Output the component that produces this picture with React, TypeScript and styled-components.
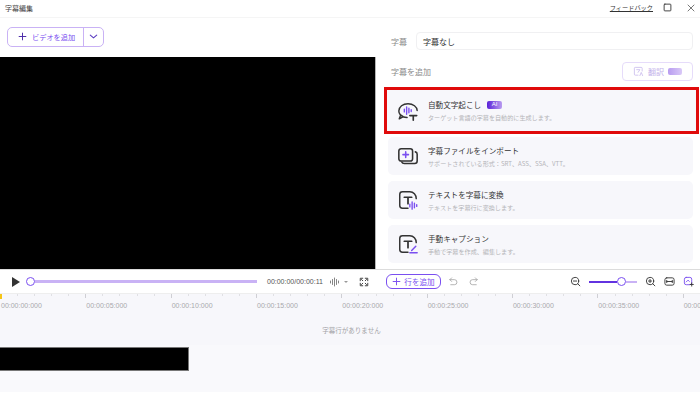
import styled, { createGlobalStyle } from "styled-components";
import { ReactNode } from "react";

const purple = "#7a4ff0";
const soft = "#c9b2f5";

const GlobalStyle = createGlobalStyle`
  html, body { margin: 0; padding: 0; background: #fff; }
  body {
    width: 700px;
    height: 400px;
    overflow: hidden;
    font-family: "Noto Sans CJK JP", "Liberation Sans", sans-serif;
    color: #333;
  }
`;

const Page = styled.div`
  width: 700px;
  height: 400px;
  display: flex;
  flex-direction: column;
`;

const TitleBar = styled.div`
  height: 18px;
  display: flex;
  align-items: center;
  justify-content: space-between;
  padding: 0 5px 2px 5px;
  box-sizing: border-box;
  border-bottom: 1px solid #f5f5f5;
`;

const AppTitle = styled.div`
  font-size: 7px;
  color: #444;
`;

const WindowTools = styled.div`
  display: flex;
  align-items: center;
`;

const Feedback = styled.a`
  font-size: 6.2px;
  color: #333;
  text-decoration: underline;
  margin-right: 10px;
`;

const CloseSlot = styled.span`
  display: flex;
  margin-left: 15px;
`;

const Main = styled.div`
  height: 251px;
  display: flex;
`;

const LeftPane = styled.div`
  width: 376px;
  display: flex;
  flex-direction: column;
`;

const AddRow = styled.div`
  height: 39px;
  display: flex;
  align-items: center;
  padding: 0 0 2px 7px;
  box-sizing: border-box;
`;

const SplitButton = styled.div`
  width: 97px;
  height: 20px;
  display: flex;
  border: 1px solid ${soft};
  border-radius: 5px;
  box-sizing: border-box;
  color: ${purple};
`;

const SplitMain = styled.div`
  flex: 1;
  display: flex;
  align-items: center;
  gap: 5px;
  padding-left: 10px;
  font-size: 7.2px;
  border-right: 1px solid ${soft};
`;

const SplitArrow = styled.div`
  width: 19px;
  display: flex;
  align-items: center;
  justify-content: center;
`;

const Video = styled.div`
  height: 212px;
  background: #000;
  border-right: 1px solid #b5b5b5;
`;

const RightPane = styled.div`
  flex: 1;
  display: flex;
  flex-direction: column;
  padding: 14px 7px 0 12px;
  box-sizing: border-box;
`;

const FieldRow = styled.div`
  display: flex;
  align-items: center;
  justify-content: space-between;
  padding-left: 3px;
  height: 18px;
`;

const FieldLabel = styled.span`
  font-size: 8px;
  color: #8b8b8b;
`;

const SelectBox = styled.div`
  width: 277px;
  height: 18px;
  display: flex;
  align-items: center;
  padding-left: 6px;
  box-sizing: border-box;
  border: 1px solid #f0f0f2;
  border-radius: 4px;
  font-size: 8px;
  color: #333;
`;

const AddHeader = styled(FieldRow)`
  margin-top: 12px;
  height: 19px;
`;

const TranslateButton = styled.div`
  width: 71px;
  height: 19px;
  display: flex;
  align-items: center;
  justify-content: center;
  gap: 4px;
  border: 1px solid #e6dcfa;
  border-radius: 4px;
  box-sizing: border-box;
  font-size: 8px;
  color: #c3b2ea;
`;

const FadedBadge = styled.span`
  width: 14px;
  height: 7px;
  border-radius: 2px;
  background: linear-gradient(90deg, #b89cf0, #d9c9f7);
`;

const CardList = styled.div`
  display: flex;
  flex-direction: column;
  gap: 6px;
  margin-top: 6px;
`;

const Highlight = styled.div`
  margin: 0 -6px -3px -4px;
  height: 47px;
  flex: none;
  border: 3px solid #e00b0b;
  box-sizing: border-box;
  display: flex;
`;

const Card = styled.div<{ $framed?: boolean }>`
  flex: ${({ $framed }) => ($framed ? "1" : "none")};
  height: ${({ $framed }) => ($framed ? "auto" : "38px")};
  display: flex;
  align-items: center;
  gap: 9px;
  padding-left: ${({ $framed }) => ($framed ? "10px" : "9px")};
  background: #f7f7fb;
  border-radius: ${({ $framed }) => ($framed ? "0" : "5px")};
`;

const CardText = styled.div`
  display: flex;
  flex-direction: column;
  gap: 3px;
`;

const CardTitle = styled.div`
  display: flex;
  align-items: center;
  gap: 6px;
  font-size: 7.6px;
  line-height: 11px;
  color: #333;
`;

const CardHint = styled.div`
  font-size: 6.1px;
  line-height: 9px;
  color: #b4b4b8;
`;

const AiBadge = styled.span`
  width: 15px;
  height: 8px;
  display: flex;
  align-items: center;
  justify-content: center;
  border-radius: 2px;
  background: linear-gradient(90deg, #5a22d8, #b99bf0);
  color: #fff;
  font-size: 6px;
  font-family: "Liberation Sans", sans-serif;
`;

const ControlBar = styled.div`
  height: 24px;
  display: flex;
  border-top: 1px solid #dcdcdc;
  box-sizing: border-box;
`;

const Player = styled.div`
  width: 375px;
  display: flex;
  align-items: center;
  padding: 0 4px 0 12px;
  box-sizing: border-box;
`;

const Knob = styled.span`
  width: 7px;
  height: 7px;
  border: 1px solid ${purple};
  border-radius: 50%;
  background: #fff;
  flex: none;
`;

const SeekTrack = styled.div`
  width: 222px;
  height: 2.5px;
  margin-right: 10px;
  background: ${soft};
`;

const SeekKnob = styled(Knob)`
  margin-left: 6px;
`;

const TimeCode = styled.span`
  font-size: 7px;
  color: #555;
  width: 56px;
  white-space: nowrap;
  font-family: "Liberation Sans", sans-serif;
`;

const PlayerTools = styled.div`
  display: flex;
  align-items: center;
  margin-left: 6px;
  gap: 3px;
`;

const Caret = styled.span`
  border-left: 2px solid transparent;
  border-right: 2px solid transparent;
  border-top: 2.5px solid #999;
  margin-right: 8px;
`;

const EditTools = styled.div`
  flex: 1;
  display: flex;
  align-items: center;
  padding-left: 11px;
`;

const AddLine = styled.div`
  width: 55px;
  height: 15px;
  display: flex;
  align-items: center;
  justify-content: center;
  gap: 3px;
  border: 1px solid ${purple};
  border-radius: 6px;
  box-sizing: border-box;
  font-size: 7.6px;
  color: ${purple};
`;

const History = styled.div`
  display: flex;
  gap: 9px;
  margin-left: 7px;
`;

const ZoomTools = styled.div`
  margin-left: auto;
  margin-right: 6px;
  display: flex;
  align-items: center;
  gap: 8px;
`;

const ZoomTrack = styled.div`
  width: 48px;
  display: flex;
  align-items: center;
`;

const ZoomFill = styled.div`
  width: 28px;
  height: 2px;
  background: #6232e0;
`;

const ZoomRest = styled.div`
  flex: 1;
  height: 2px;
  background: ${soft};
`;

const Timeline = styled.div`
  height: 99px;
  display: flex;
  flex-direction: column;
  background: #f7f7fb;
  position: relative;
`;

const Playhead = styled.div`
  position: absolute;
  left: 0;
  top: 1px;
  width: 1.5px;
  height: 5px;
  background: #f5c518;
`;

const Ruler = styled.div`
  height: 19px;
  padding-top: 4px;
  box-sizing: border-box;
  display: flex;
  overflow: hidden;
  background:
    repeating-linear-gradient(90deg, #cfcfd4 0 1px, transparent 1px 85.33px) 0 0 / 100% 4px no-repeat,
    repeating-linear-gradient(90deg, #e0e0e4 0 1px, transparent 1px 17.07px) 0 0 / 100% 2px no-repeat;
  border-top: 1px solid #eee;
`;

const Tick = styled.span`
  flex: none;
  width: 85.33px;
  padding: 3px 0 0 1px;
  box-sizing: border-box;
  font-size: 7px;
  line-height: 9px;
  color: #a9a9ad;
  font-family: "Liberation Sans", sans-serif;
`;

const EmptyRow = styled.div`
  height: 33px;
  display: flex;
  align-items: center;
  justify-content: center;
  font-size: 6.5px;
  color: #a2a2a6;
  padding: 2px 0 0 3px;
  box-sizing: border-box;
`;

const Track = styled.div`
  flex: 1;
  padding-top: 2px;
  background: #f9f9fc;
`;

const Clip = styled.div`
  width: 189px;
  height: 24px;
  background: #000;
  border: 1px solid #777;
  border-left: 0;
  box-sizing: border-box;
`;

const Icon = ({ size, children, stroke = "#333", width = 1.3 }: { size: number; children: ReactNode; stroke?: string; width?: number }) => (
  <svg width={size} height={size} viewBox="0 0 24 24" fill="none" stroke={stroke} strokeWidth={width} strokeLinecap="round" strokeLinejoin="round" style={{ flex: "none" }}>
    {children}
  </svg>
);

const Bars = ({ x, y, color = purple }: { x: number; y: number; color?: string }) => (
  <path d={`M${x} ${y - 1.5}v3M${x + 2.5} ${y - 4}v8M${x + 5} ${y - 2.5}v5M${x + 7.5} ${y - 1}v2`} stroke={color} strokeWidth={1.5} />
);

const Plus = ({ color, size }: { color: string; size: number }) => (
  <Icon size={size} stroke={color} width={2.6}>
    <path d="M12 3v18M3 12h18" />
  </Icon>
);

const TranscribeIcon = () => (
  <Icon size={22} width={1.6}>
    <path d="M6.5 18C3.500 16.500 2 14.500 2 12c0-4.500 4.500-8 10-8s10 3.500 10 7.500M11 19c-1.500 0-3-.2-4.500-.7L2.500 20.500l1.300-3.500" />
    <Bars x={8} y={11.500} />
    <path d="M14 17h7.500M17.750 17v5" strokeWidth={1.8} />
  </Icon>
);

const ImportIcon = () => (
  <Icon size={22} width={1.7}>
    <rect x="2" y="4" width="15" height="13.500" rx="2.500" />
    <path d="M20 7.500c1.300.3 2 1.200 2 2.500v7.500c0 1.700-1 2.700-2.700 2.700H8c-1.500 0-2.400-.6-2.800-1.700" />
    <path d="M9.500 7.500v6M6.500 10.500h6" stroke={purple} />
  </Icon>
);

const DocFrame = () => (
  <path d="M12 21H6c-2 0-3-1-3-3V6c0-2 1-3 3-3h8c4 0 7 3.500 7 7.500" />
);

const TextLetter = () => <path d="M8 9h8M12 9v7" strokeWidth={1.9} />;

const ConvertIcon = () => (
  <Icon size={22} width={1.6}>
    <DocFrame />
    <TextLetter />
    <Bars x={14} y={18} />
  </Icon>
);

const ManualIcon = () => (
  <Icon size={22} width={1.6}>
    <DocFrame />
    <TextLetter />
    <path d="M14 21.500h8M16 19l4.500-4.500" stroke={purple} />
  </Icon>
);

const MagnifierIcon = ({ plus }: { plus?: boolean }) => (
  <Icon size={11} width={2}>
    <circle cx="11" cy="11" r="8" />
    <path d="M17 17l4.500 4.500M7.500 11h7" />
    {plus && <path d="M11 7.500v7" />}
  </Icon>
);

const cards = [
  { icon: <ImportIcon />, title: "字幕ファイルをインポート", hint: "サポートされている形式：SRT、ASS、SSA、VTT。" },
  { icon: <ConvertIcon />, title: "テキストを字幕に変換", hint: "テキストを字幕行に変換します。" },
  { icon: <ManualIcon />, title: "手動キャプション", hint: "手動で字幕を作成、編集します。" },
];

const ticks = ["00:00:00:000", "00:00:05:000", "00:00:10:000", "00:00:15:000", "00:00:20:000", "00:00:25:000", "00:00:30:000", "00:00:35:000", "00:00:40:000"];

const App = () => {
  return (
    <Page>
      <GlobalStyle />
      <TitleBar>
        <AppTitle>字幕編集</AppTitle>
        <WindowTools>
          <Feedback>フィードバック</Feedback>
          <Icon size={9} width={2.4}>
            <rect x="3" y="3" width="18" height="18" rx="2" />
          </Icon>
          <CloseSlot>
            <Icon size={8} width={2}>
              <path d="M3 3l18 18M21 3L3 21" />
            </Icon>
          </CloseSlot>
        </WindowTools>
      </TitleBar>

      <Main>
        <LeftPane>
          <AddRow>
            <SplitButton>
              <SplitMain>
                <Plus color="#4b2aa8" size={9} />
                ビデオを追加
              </SplitMain>
              <SplitArrow>
                <Icon size={11} stroke="#5a3cc0" width={2.4}>
                  <path d="M5 9l7 6 7-6" />
                </Icon>
              </SplitArrow>
            </SplitButton>
          </AddRow>
          <Video />
        </LeftPane>

        <RightPane>
          <FieldRow>
            <FieldLabel>字幕</FieldLabel>
            <SelectBox>字幕なし</SelectBox>
          </FieldRow>
          <AddHeader>
            <FieldLabel>字幕を追加</FieldLabel>
            <TranslateButton>
              <Icon size={11} stroke="#c3b2ea" width={1.6}>
                <path d="M20 11V5a2 2 0 0 0-2-2H5a2 2 0 0 0-2 2v13a2 2 0 0 0 2 2h6M8 8h7l-4 6M15 21l3-7 3 7" />
              </Icon>
              翻訳
              <FadedBadge />
            </TranslateButton>
          </AddHeader>
          <CardList>
            <Highlight>
              <Card $framed>
                <TranscribeIcon />
                <CardText>
                  <CardTitle>
                    自動文字起こし
                    <AiBadge>AI</AiBadge>
                  </CardTitle>
                  <CardHint>ターゲット言語の字幕を自動的に生成します。</CardHint>
                </CardText>
              </Card>
            </Highlight>
            {cards.map((card) => (
              <Card key={card.title}>
                {card.icon}
                <CardText>
                  <CardTitle>{card.title}</CardTitle>
                  <CardHint>{card.hint}</CardHint>
                </CardText>
              </Card>
            ))}
          </CardList>
        </RightPane>
      </Main>

      <ControlBar>
        <Player>
          <svg width="8" height="10" viewBox="0 0 8 10" style={{ flex: "none" }}>
            <path d="M0 0l8 5-8 5z" fill="#333" />
          </svg>
          <SeekKnob />
          <SeekTrack />
          <TimeCode>00:00:00/00:00:11</TimeCode>
          <PlayerTools>
            <Icon size={12} stroke="#777" width={1.8}>
              <path d="M3 10v4M7 7v10M11 4v16M15 7v10M19 10v4" />
            </Icon>
            <Caret />
            <Icon size={10} stroke="#444" width={2.4}>
              <path d="M9 3H3v6M15 3h6v6M9 21H3v-6M15 21h6v-6M6 6l3 3M18 6l-3 3M6 18l3-3M18 18l-3-3" />
            </Icon>
          </PlayerTools>
        </Player>
        <EditTools>
          <AddLine>
            <Plus color={purple} size={9} />
            行を追加
          </AddLine>
          <History>
            <Icon size={11} stroke="#999" width={1.6}>
              <path d="M8 4L4 8l4 4M4 8h10a5.500 5.500 0 0 1 0 11H6" />
            </Icon>
            <Icon size={11} stroke="#999" width={1.6}>
              <path d="M16 4l4 4-4 4M20 8H10a5.500 5.500 0 0 0 0 11h8" />
            </Icon>
          </History>
          <ZoomTools>
            <MagnifierIcon />
            <ZoomTrack>
              <ZoomFill />
              <Knob />
              <ZoomRest />
            </ZoomTrack>
            <MagnifierIcon plus />
            <Icon size={11} width={2}>
              <rect x="2" y="4" width="20" height="16" rx="4" />
              <path d="M6 12h12M6 9.500v5M18 9.500v5" />
            </Icon>
            <Icon size={11} stroke={purple} width={2}>
              <rect x="3" y="3" width="16" height="16" rx="4" />
              <path d="M7 13l4-4 3 3" />
              <path d="M19 15v7M15.500 18.500h7" stroke="#333" />
            </Icon>
          </ZoomTools>
        </EditTools>
      </ControlBar>

      <Timeline>
        <Playhead />
        <Ruler>
          {ticks.map((tick) => (
            <Tick key={tick}>{tick}</Tick>
          ))}
        </Ruler>
        <EmptyRow>字幕行がありません</EmptyRow>
        <Track>
          <Clip />
        </Track>
      </Timeline>
    </Page>
  );
};

export default App;
